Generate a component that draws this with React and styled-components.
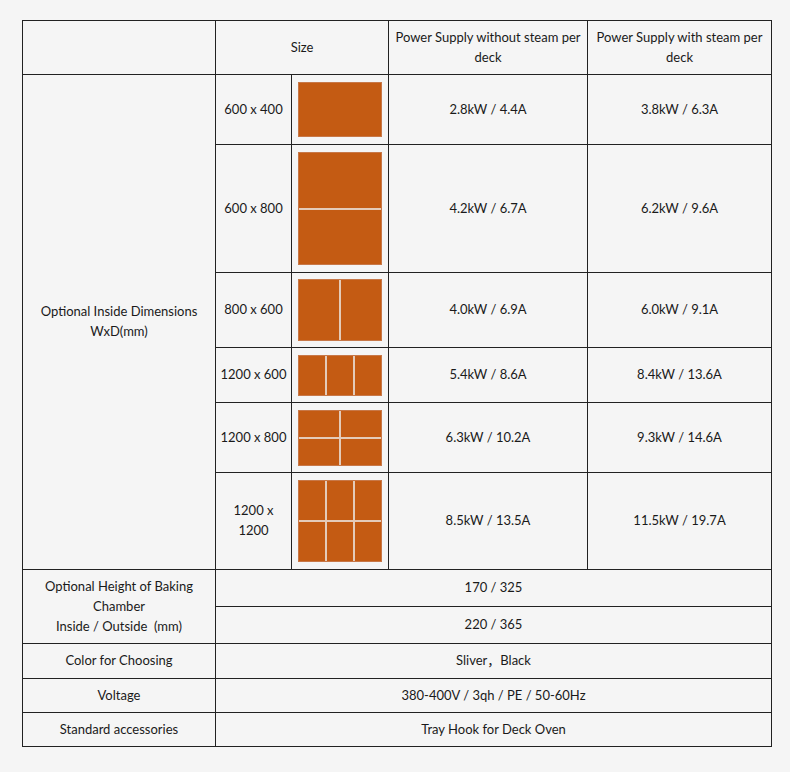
import React from "react";
import styled, { createGlobalStyle } from "styled-components";

const Global = createGlobalStyle`
  html, body { margin: 0; padding: 0; background: #f5f5f5; }
  body { font-family: Lato, "Noto Sans CJK SC", sans-serif; color: #1a1a1a; }
`;

const Page = styled.div`
  padding: 20px 18px 25px 22px;
  background: #f5f5f5;
`;

const Table = styled.table`
  border-collapse: collapse;
  table-layout: fixed;
  width: 750px;
  font-size: 13px;
  line-height: 20px;
`;

const Row = styled.tr`
  height: ${(p) => p.$h}px;
`;

const Cell = styled.td`
  border: 1px solid #222;
  text-align: center;
  vertical-align: middle;
  padding: 0 4px 2px;
`;

const ImgCell = styled.td`
  border: 1px solid #222;
  text-align: center;
  vertical-align: middle;
  padding: 0;
`;

const Tray = styled.div`
  display: inline-grid;
  vertical-align: middle;
  width: 84px;
  height: ${(p) => p.$h}px;
  box-sizing: border-box;
  grid-template-columns: repeat(${(p) => p.$cols}, 1fr);
  grid-template-rows: repeat(${(p) => p.$rows}, 1fr);
  gap: 2px;
  background: #e4cbb9;
  border: 1px solid #c87848;
`;

const Pan = styled.div`
  background: #c45b13;
`;

const Pans = ({ h, cols, rows }) => (
  <Tray $h={h} $cols={cols} $rows={rows}>
    {Array.from({ length: cols * rows }).map((_, i) => (
      <Pan key={i} />
    ))}
  </Tray>
);

const sizes = [
  { label: "600 x 400", h: 70, img: 55, cols: 1, rows: 1, a: "2.8kW / 4.4A", b: "3.8kW / 6.3A" },
  { label: "600 x 800", h: 128, img: 113, cols: 1, rows: 2, a: "4.2kW / 6.7A", b: "6.2kW / 9.6A" },
  { label: "800 x 600", h: 75, img: 62, cols: 2, rows: 1, a: "4.0kW / 6.9A", b: "6.0kW / 9.1A" },
  { label: "1200 x 600", h: 55, img: 41, cols: 3, rows: 1, a: "5.4kW / 8.6A", b: "8.4kW / 13.6A" },
  { label: "1200 x 800", h: 70, img: 56, cols: 2, rows: 2, a: "6.3kW / 10.2A", b: "9.3kW / 14.6A" },
  { label: "1200 x 1200", h: 97, img: 82, cols: 3, rows: 2, a: "8.5kW / 13.5A", b: "11.5kW / 19.7A" },
];

export default function App() {
  return (
    <Page>
      <Global />
      <Table>
        <colgroup>
          <col style={{ width: 193 }} />
          <col style={{ width: 76 }} />
          <col style={{ width: 97 }} />
          <col style={{ width: 199 }} />
          <col style={{ width: 184 }} />
        </colgroup>
        <tbody>
          <Row $h={54}>
            <Cell />
            <Cell colSpan={2}>Size</Cell>
            <Cell>Power Supply without steam per deck</Cell>
            <Cell>Power Supply with steam per deck</Cell>
          </Row>
          {sizes.map((s, i) => (
            <Row $h={s.h} key={s.label}>
              {i === 0 && (
                <Cell rowSpan={sizes.length}>
                  Optional Inside Dimensions
                  <br />
                  WxD(mm)
                </Cell>
              )}
              <Cell>{s.label}</Cell>
              <ImgCell>
                <Pans h={s.img} cols={s.cols} rows={s.rows} />
              </ImgCell>
              <Cell>{s.a}</Cell>
              <Cell>{s.b}</Cell>
            </Row>
          ))}
          <Row $h={37}>
            <Cell rowSpan={2}>
              Optional Height of Baking Chamber
              <br />
              Inside / Outside&nbsp;&nbsp;(mm)
            </Cell>
            <Cell colSpan={4}>170 / 325</Cell>
          </Row>
          <Row $h={37}>
            <Cell colSpan={4}>220 / 365</Cell>
          </Row>
          <Row $h={35}>
            <Cell>Color for Choosing</Cell>
            <Cell colSpan={4}>Sliver，Black</Cell>
          </Row>
          <Row $h={34}>
            <Cell>Voltage</Cell>
            <Cell colSpan={4}>380-400V / 3qh / PE / 50-60Hz</Cell>
          </Row>
          <Row $h={34}>
            <Cell>Standard accessories</Cell>
            <Cell colSpan={4}>Tray Hook for Deck Oven</Cell>
          </Row>
        </tbody>
      </Table>
    </Page>
  );
}
